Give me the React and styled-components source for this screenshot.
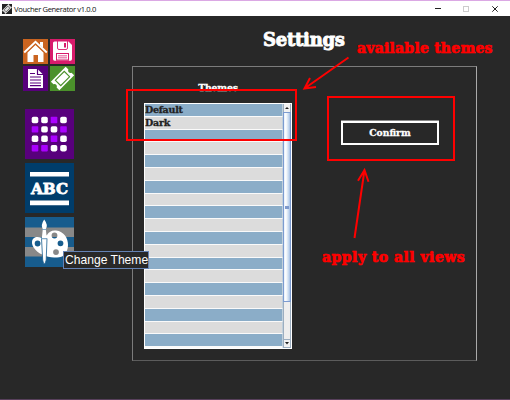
import React from "react";
import styled, { createGlobalStyle } from "styled-components";

const Global = createGlobalStyle`
  * { box-sizing: border-box; }
  body { margin: 0; background: #282828; overflow: hidden; }
`;

const Window = styled.div`
  position: relative;
  display: flex;
  flex-direction: column;
  width: 510px;
  height: 400px;
  background: #282828;
  border-top: 1px solid #dba8e4;
  border-bottom: 1px solid #58405c;
  overflow: hidden;
`;

const TitleBar = styled.header`
  display: flex;
  align-items: center;
  height: 15px;
  flex: none;
  padding: 0 11px 0 2px;
  background: #fff;
`;

const WindowTitle = styled.span`
  margin-left: 2px;
  flex: 1;
  font: 7.6px/14px "Open Sans", "Noto Sans", sans-serif;
  letter-spacing: -0.36px;
  color: #111;
`;

const WindowControls = styled.svg`
  display: block;
`;

const Body = styled.div`
  display: flex;
  flex: 1;
  min-height: 0;
`;

const Sidebar = styled.nav`
  width: 132px;
  flex: none;
  padding: 23px 0 0 23px;
`;

const SmallTiles = styled.div`
  display: grid;
  grid-template-columns: 25px 25px;
  grid-auto-rows: 25px;
  gap: 2px;
`;

const LargeTiles = styled.div`
  display: flex;
  flex-direction: column;
  gap: 4px;
  margin: 18px 0 0 2px;
`;

const Tile = styled.svg`
  display: block;
  width: ${(p) => p.$size}px;
  height: ${(p) => p.$tall || p.$size}px;
  background: ${(p) => p.$bg};
`;

const Main = styled.main`
  display: flex;
  flex-direction: column;
  width: 345px;
`;

const Slab = styled.span`
  font-family: "DejaVu Serif", serif;
  font-weight: 700;
  font-size: ${(p) => p.$size}px;
  line-height: 1;
  letter-spacing: ${(p) => p.$track || 0}px;
  white-space: nowrap;
  color: ${(p) => p.$color || "#fff"};
  -webkit-text-stroke: ${(p) => p.$weight || 0.3}px currentColor;
`;

const Heading = styled.h1`
  height: 50px;
  margin: 0;
  padding: 15px 0 0 131px;
  font-size: 18px;
  line-height: 18px;
`;

const Panel = styled.section`
  display: flex;
  gap: 49px;
  height: 295px;
  padding: 15px 0 0 11px;
  border: 1px solid;
  border-color: #7c7c7c #aaa #5c5c5c #7c7c7c;
`;

const ThemeColumn = styled.div`
  width: 148px;
`;

const ColumnLabel = styled.div`
  display: flex;
  justify-content: center;
  height: 21px;
  padding-top: 1px;
  line-height: 10px;
`;

const ListFrame = styled.div`
  display: flex;
  height: 246px;
  padding: 1px;
  background: #fff;
`;

const Rows = styled.div`
  display: grid;
  grid-template-rows: repeat(19, 12.8px) 1px;
  width: 138px;
  overflow: hidden;
`;

const Row = styled.div`
  display: flex;
  align-items: center;
  background: ${(p) => (p.$odd ? "#dcdcdc" : "#8badc8")};
  border-bottom: 1px solid #fafafa;
  border-right: 1px solid #c0d0dc;
`;

const Scrollbar = styled.div`
  display: flex;
  flex-direction: column;
  width: 8px;
  background: #eee;
  border: solid #9caec0;
  border-width: 0 1px 1px;
`;

const ScrollButton = styled.svg`
  display: block;
  width: 6px;
  height: 8px;
  flex: none;
  background: #f2f2f2;
`;

const Thumb = styled.div`
  display: flex;
  align-items: center;
  justify-content: center;
  height: 190px;
  margin: 0 -1px;
  border: 1px solid #7c9bd0;
  background: linear-gradient(90deg, #e4eefa, #fff 30%, #c8daef 75%, #a5bfe6);
`;

const Grip = styled.div`
  width: 4px;
  height: 3px;
  background: #7d99cc;
`;

const Track = styled.div`
  flex: 1;
`;

const ConfirmButton = styled.button`
  width: 98px;
  height: 24px;
  margin-top: 39px;
  padding: 0;
  display: flex;
  align-items: center;
  justify-content: center;
  background: #282828;
  border: 2px solid #fff;
  box-shadow: 0 -1px #888;
`;

const Tooltip = styled.div`
  position: absolute;
  left: 63px;
  top: 250px;
  width: 86px;
  height: 18px;
  padding-left: 1px;
  border: 1px solid #6482b4;
  background: #282828;
  color: #fff;
  font: 12.1px/17px "Liberation Sans", Arial, sans-serif;
  white-space: nowrap;
`;

const Callout = styled.div`
  position: absolute;
  left: ${(p) => p.$x}px;
  top: ${(p) => p.$y}px;
  width: ${(p) => p.$w}px;
  height: ${(p) => p.$h}px;
  border: 2px solid #f00;
`;

const Note = styled.div`
  position: absolute;
  left: ${(p) => p.$x}px;
  top: ${(p) => p.$y}px;
  display: flex;
`;

const Arrows = styled.svg`
  position: absolute;
  left: 0;
  top: -1px;
  pointer-events: none;
`;

const themes = ["Default", "Dark"];
const dots = ["wwpw", "pwwp", "wwpw", "ppww"];

const TicketShape = () => (
  <g transform="rotate(-45 12.5 12.5)">
    <path fill="#fff" d="M2 6.5H23V10.3A2.3 2.3 0 0 0 23 14.7V18.5H2V14.7A2.3 2.3 0 0 0 2 10.3Z" />
    <rect x="6.2" y="8.7" width="12.6" height="7.6" fill="none" stroke="#4b912b" strokeWidth="1.1" />
  </g>
);

export default function App() {
  return (
    <Window>
      <Global />
      <TitleBar>
        <svg width="10" height="10" viewBox="0 0 25 25">
          <rect width="25" height="25" fill="#222" />
          <g transform="rotate(-45 12.5 12.5)">
            <path fill="#ddd" d="M1 6.5H24V10.3A2.3 2.3 0 0 0 24 14.7V18.5H1V14.7A2.3 2.3 0 0 0 1 10.3Z" />
            <rect x="6" y="9" width="13" height="7" fill="none" stroke="#333" strokeWidth="1.5" />
          </g>
        </svg>
        <WindowTitle>Voucher Generator v1.0.0</WindowTitle>
        <WindowControls width="64" height="14" viewBox="0 0 64 14" fill="none">
          <path d="M0 6.5H6" stroke="#222" />
          <rect x="28.5" y="4.5" width="5" height="5" stroke="#ccc" />
          <path d="M57.3 4.3L62.7 9.7M62.7 4.3L57.3 9.7" stroke="#222" />
        </WindowControls>
      </TitleBar>
      <Body>
        <Sidebar>
          <SmallTiles>
            <Tile $size={25} $bg="#ca6420" viewBox="0 0 25 25">
              <path fill="#fff" d="M17 3H20V9L17 6ZM4.5 13.5L12.5 6L20.5 13.5V23H15V16H10.5V23H4.5Z" />
              <path fill="none" stroke="#fff" strokeWidth="1.9" d="M1.2 13.5L12.5 2.7L23.8 13.5" />
              <path fill="none" stroke="#ca6420" strokeWidth="0.7" d="M2.6 14.6L12.5 5.2L22.4 14.6" />
            </Tile>
            <Tile $size={25} $bg="#d81b6b" viewBox="0 0 25 25">
              <path fill="#fff" d="M4.5 2.5H18.5L22 6V20Q22 21.7 20.3 21.7H4.7Q3 21.7 3 20V4Q3 2.5 4.5 2.5Z" />
              <path fill="none" stroke="#d81b6b" strokeWidth="0.9" d="M7.5 2V9Q7.5 10.5 9 10.5H16Q17.5 10.5 17.5 9V2" />
              <path fill="#d81b6b" d="M14 4H16V8.5H14ZM6 14H19V21.7H6Z" />
              <path fill="#fff" d="M7 15H18V20.5H7Z" />
              <path fill="#d81b6b" d="M8 16.5H17V17.3H8ZM8 18.5H17V19.3H8Z" />
            </Tile>
            <Tile $size={25} $bg="#58007c" viewBox="0 0 25 25">
              <path fill="#fff" d="M5 3H14.5L20 8.5V22H5Z" />
              <path fill="none" stroke="#58007c" strokeWidth="1.2" d="M14.5 3V8.5H20M7 7.5H12M7 11H18M7 14H18M7 17H18M7 19.7H18" />
            </Tile>
            <Tile $size={25} $bg="#4b912b" viewBox="0 0 25 25">
              <TicketShape />
            </Tile>
          </SmallTiles>
          <LargeTiles>
            <Tile $size={49} $tall={50} $bg="#58007c" viewBox="0 0 49 50">
              {dots.flatMap((line, r) =>
                [...line].map((d, c) => (
                  <rect
                    key={`${r}${c}`}
                    x={6.7 + c * 9.5}
                    y={7.8 + r * 9.4}
                    width="6.6"
                    height="6.4"
                    rx={d === "w" ? 1.8 : 0.8}
                    fill={d === "w" ? "#fff" : "#aa00ff"}
                  />
                ))
              )}
            </Tile>
            <Tile $size={49} $tall={50} $bg="#003d6b" viewBox="0 0 49 50">
              <path fill="#fff" d="M5 9H44V13.4H5ZM5 37.5H44V42.3H5Z" />
              <text x="6" y="30.5" textLength="37" lengthAdjust="spacingAndGlyphs" fill="#fff" stroke="#fff" strokeWidth="0.8" fontFamily="DejaVu Serif" fontWeight="700" fontSize="15.5">ABC</text>
            </Tile>
            <Tile $size={49} $tall={50} $bg="#175c8d" viewBox="0 0 49 50">
              <path fill="#888" d="M0 10.5H49V20H0ZM0 30H49V39.5H0Z" />
              <path
                fill="#fff"
                fillRule="evenodd"
                d="M22 18C24 14.5 27 13 31 13.5C39 14.5 43 21 43 28C43 36 38 40.5 32 40.5C28 40.5 24 40 21 39C12 36.5 6.5 29.5 7 25C7.3 20 12 19 17 21ZM29.5 15.6A2.9 2.9 0 1 0 29.5 21.4A2.9 2.9 0 1 0 29.5 15.6ZM35.5 23.4A2.9 2.9 0 1 0 35.5 29.2A2.9 2.9 0 1 0 35.5 23.4ZM31 32.2A2.9 2.9 0 1 0 31 38A2.9 2.9 0 1 0 31 32.2ZM12.6 23.6A2.9 2.9 0 1 0 12.6 29.4A2.9 2.9 0 1 0 12.6 23.6Z"
              />
              <path fill="#fff" stroke="#175c8d" strokeWidth="0.8" d="M16.5 21.5H22L21.2 43Q19.2 51 17.7 43Z" />
              <path fill="#fff" d="M19.2 2.5Q23.4 8 20.8 12L21.8 21.5H16.8L17.8 12Q15.4 8 19.2 2.5Z" />
              <path stroke="#6b98ba" strokeWidth="0.8" d="M17 12.5H21.5M16.5 21.8H22" />
            </Tile>
          </LargeTiles>
        </Sidebar>
        <Main>
          <Heading>
            <Slab $size={18} $weight={0.9} $track={-0.25}>Settings</Slab>
          </Heading>
          <Panel>
            <ThemeColumn>
              <ColumnLabel>
                <Slab $size={9.3} $track={-0.15}>Themes</Slab>
              </ColumnLabel>
              <ListFrame>
                <Rows>
                  {Array.from({ length: 20 }, (_, i) => (
                    <Row key={i} $odd={i % 2 === 1}>
                      {themes[i] && <Slab $size={9.5} $track={-0.25} $color="#222">{themes[i]}</Slab>}
                    </Row>
                  ))}
                </Rows>
                <Scrollbar>
                  <ScrollButton viewBox="0 0 6 8">
                    <path fill="#222" d="M3 3L5 5H1Z" />
                  </ScrollButton>
                  <Thumb>
                    <Grip />
                  </Thumb>
                  <Track />
                  <ScrollButton viewBox="0 0 6 8">
                    <path fill="#9caec0" d="M0 0H6V1H0Z" />
                    <path fill="#222" d="M1 3H5L3 5.5Z" />
                  </ScrollButton>
                </Scrollbar>
              </ListFrame>
            </ThemeColumn>
            <ConfirmButton>
              <Slab $size={9.2}>Confirm</Slab>
            </ConfirmButton>
          </Panel>
        </Main>
      </Body>
      <Tooltip>Change Theme</Tooltip>
      <Callout $x={126} $y={88} $w={171} $h={52} />
      <Callout $x={327} $y={95} $w={128} $h={65} />
      <Note $x={357} $y={40}>
        <Slab $size={14} $weight={0.7} $track={0.23} $color="#f00">available themes</Slab>
      </Note>
      <Note $x={322} $y={249}>
        <Slab $size={14} $weight={0.7} $track={0.48} $color="#f00">apply to all views</Slab>
      </Note>
      <Arrows width="510" height="400" fill="none" stroke="#f00" strokeWidth="2">
        <path d="M348.5 57.5L304.5 88.5M310 78L304.5 88.5L316 87" />
        <path d="M354.5 238L364.5 170M358 180.8L364.5 170L368.5 181.8" />
      </Arrows>
    </Window>
  );
}
